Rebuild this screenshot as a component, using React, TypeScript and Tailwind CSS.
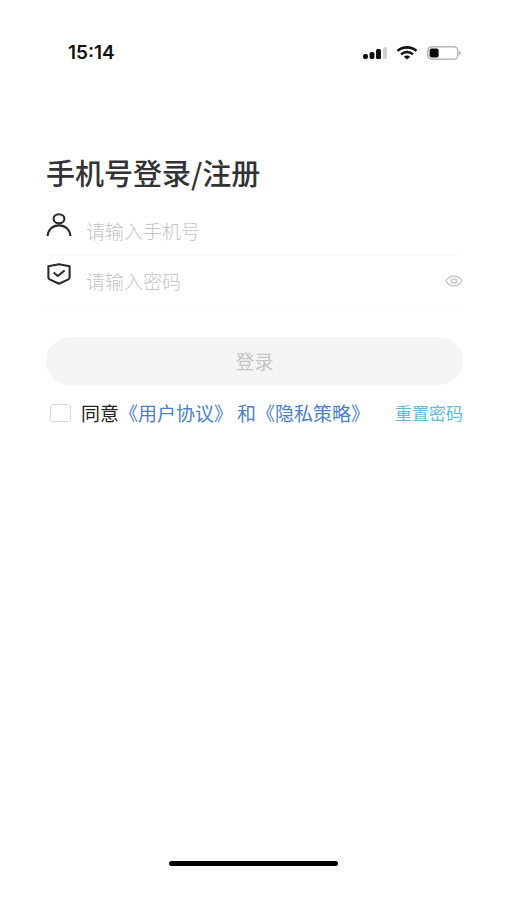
import { useState } from "react";

function SignalIcon() {
  return (
    <svg width="24" height="14" viewBox="0 0 24 14" fill="#111111">
      <rect x="0" y="8" width="5" height="5" rx="2" />
      <rect x="6.5" y="6" width="5" height="7" rx="2" />
      <rect x="13" y="3" width="5" height="10" rx="1.5" />
      <rect x="20" y="1" width="4" height="12" rx="1.5" fill="#d2d2d2" />
    </svg>
  );
}

function WifiIcon() {
  return (
    <svg width="22" height="14" viewBox="0 0 22 14" fill="none" stroke="#111111">
      <path d="M1.5 4.9C6.8.2 15.2.2 20.5 4.9" strokeWidth="2.6" />
      <path d="M5 8.3c3.4-3 8.6-3 12 0" strokeWidth="2.4" />
      <path d="M7.8 10.7c1.8-1.5 4.6-1.5 6.4 0L11 13.5z" fill="#111111" stroke="none" />
    </svg>
  );
}

function BatteryIcon() {
  return (
    <svg width="34" height="14" viewBox="0 0 34 14" fill="none">
      <rect x="0.8" y="0.8" width="30" height="12.4" rx="4" stroke="#a9a9a9" strokeWidth="1.3" />
      <rect x="2.6" y="2.5" width="9" height="9" rx="2" fill="#0a0a0a" />
      <path d="M32 5v4c1.1-.3 1.7-1 1.7-2S33.100 5.300 32 5z" fill="#a9a9a9" />
    </svg>
  );
}

function UserIcon() {
  return (
    <svg width="26" height="24" viewBox="0 0 26 24" fill="none" stroke="#2a2a2a" strokeWidth="2.1">
      <ellipse cx="13" cy="5.8" rx="5.4" ry="4.6" />
      <path d="M1.5 23c.6-6.4 5.300-10.600 11.500-10.600S23.900 16.600 24.500 23" />
    </svg>
  );
}

function ShieldIcon() {
  return (
    <svg
      width="26"
      height="22"
      viewBox="0 0 26 22"
      fill="none"
      stroke="#2a2a2a"
      strokeWidth="2.1"
      strokeLinejoin="round"
    >
      <path d="M13 1.3l10.6 2v11.300c0 .9-.4 1.400-1.200 1.800L13 20.700l-9.400-4.300c-.8-.4-1.200-.9-1.200-1.800V3.300z" />
      <path d="M7.600 9.500l4.200 3.500L18.600 7.500" />
    </svg>
  );
}

function EyeIcon() {
  return (
    <svg width="18" height="12" viewBox="0 0 18 12" fill="none" stroke="#c2c2c2" strokeWidth="1.3">
      <path d="M1 6c1.900-3.200 4.700-4.900 8-4.900S15.100 2.800 17 6c-1.900 3.200-4.700 4.900-8 4.900S2.900 9.200 1 6z" />
      <ellipse cx="9" cy="6" rx="2.7" ry="2.2" />
    </svg>
  );
}

export default function App() {
  const [phone, setPhone] = useState("");
  const [password, setPassword] = useState("");
  const [visible, setVisible] = useState(false);
  const [agreed, setAgreed] = useState(false);

  return (
    <div className="flex min-h-screen flex-col bg-white font-['Noto_Sans_CJK_SC',sans-serif]">
      <header className="flex h-[106px] items-center justify-between pr-[46px] pl-[68px]">
        <span className="font-['Inter','Noto_Sans_CJK_SC',sans-serif] text-[19px] font-semibold text-[#111111]">
          15:14
        </span>
        <div className="flex items-center gap-[9px]">
          <SignalIcon />
          <WifiIcon />
          <BatteryIcon />
        </div>
      </header>

      <main className="pt-[46px] pr-11 pl-[46px]">
        <h1 className="text-[29px] leading-10 font-medium text-[#333333]">手机号登录/注册</h1>

        <form className="pt-3.5" onSubmit={(e) => e.preventDefault()}>
          <div className="flex h-[50px] items-start gap-[14px] border-b border-[#fafafa] pt-[7px]">
            <label htmlFor="phone" aria-label="手机号">
              <UserIcon />
            </label>
            <input
              id="phone"
              type="tel"
              value={phone}
              onChange={(e) => setPhone(e.target.value)}
              placeholder="请输入手机号"
              className="mt-1 h-7 min-w-0 flex-1 text-[19px] font-light text-[#333333] outline-none placeholder:text-[#c4c4c4]"
            />
          </div>

          <div className="flex h-[50px] items-start gap-[14px] border-b border-[#f7f7f7] pt-[7px]">
            <label htmlFor="password" aria-label="密码">
              <ShieldIcon />
            </label>
            <input
              id="password"
              type={visible ? "text" : "password"}
              value={password}
              onChange={(e) => setPassword(e.target.value)}
              placeholder="请输入密码"
              className="mt-1 h-7 min-w-0 flex-1 text-[19px] font-light text-[#333333] outline-none placeholder:text-[#c4c4c4]"
            />
            <button
              type="button"
              aria-label="显示密码"
              onClick={() => setVisible(!visible)}
              className="mt-1 flex h-7 items-center"
            >
              <EyeIcon />
            </button>
          </div>

          <button
            type="submit"
            className="mt-[31px] h-12 w-full rounded-full bg-[#f5f5f5] text-[19px] text-[#c4c4c4]"
          >
            登录
          </button>

          <div className="mt-3.5 flex items-center justify-between pl-1 whitespace-nowrap">
            <div className="flex items-center text-[19px] leading-7">
              <input
                id="agree"
                type="checkbox"
                checked={agreed}
                onChange={(e) => setAgreed(e.target.checked)}
                className="mr-2.5 h-[18px] w-[21px] appearance-none rounded-[3px] border border-[#d9d9d9] checked:bg-[#4a7fd0]"
              />
              <label htmlFor="agree" className="text-[#222222]">
                同意
              </label>
              <a href="#terms" className="text-[#4a7fd0]">
                《用户协议》
              </a>
              <span className="ml-1 text-[#4a7fd0]">和</span>
              <a href="#privacy" className="text-[#4a7fd0]">
                《隐私策略》
              </a>
            </div>
            <a href="#reset" className="text-[17px] leading-7 text-[#62bbd6]">
              重置密码
            </a>
          </div>
        </form>
      </main>

      <div className="mx-auto mt-auto mb-[34px] h-[5px] w-1/3 rounded-full bg-black" />
    </div>
  );
}
